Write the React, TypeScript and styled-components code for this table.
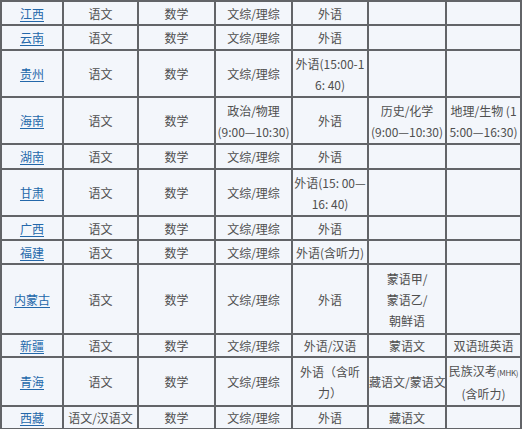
import React from 'react';
import styled, { createGlobalStyle } from 'styled-components';

const GlobalStyle = createGlobalStyle`
  html, body {
    margin: 0;
    padding: 0;
    background: #ffffff;
  }
  body {
    font-family: 'Noto Sans CJK SC', 'Noto Sans', sans-serif;
  }
`;

const COL_WIDTHS = [62, 75, 77, 77, 76, 78, 75];

const Small = styled.span`
  font-size: 8px;
  letter-spacing: -0.3px;
`;

type Row = {
  province: string;
  height: number;
  cells: React.ReactNode[][];
};

const ROWS: Row[] = [
  { province: '江西', height: 24, cells: [['语文'], ['数学'], ['文综/理综'], ['外语'], [], []] },
  { province: '云南', height: 25, cells: [['语文'], ['数学'], ['文综/理综'], ['外语'], [], []] },
  { province: '贵州', height: 47, cells: [['语文'], ['数学'], ['文综/理综'], ['外语(15:00-1', '6: 40)'], [], []] },
  {
    province: '海南',
    height: 47,
    cells: [
      ['语文'],
      ['数学'],
      ['政治/物理', '(9:00—10:30)'],
      ['外语'],
      ['历史/化学', '(9:00—10:30)'],
      ['地理/生物 (1', '5:00—16:30)'],
    ],
  },
  { province: '湖南', height: 25, cells: [['语文'], ['数学'], ['文综/理综'], ['外语'], [], []] },
  { province: '甘肃', height: 47, cells: [['语文'], ['数学'], ['文综/理综'], ['外语(15: 00—', '16: 40)'], [], []] },
  { province: '广西', height: 24, cells: [['语文'], ['数学'], ['文综/理综'], ['外语'], [], []] },
  { province: '福建', height: 24, cells: [['语文'], ['数学'], ['文综/理综'], ['外语(含听力)'], [], []] },
  {
    province: '内蒙古',
    height: 70,
    cells: [['语文'], ['数学'], ['文综/理综'], ['外语'], ['蒙语甲/', '蒙语乙/', '朝鲜语'], []],
  },
  { province: '新疆', height: 23, cells: [['语文'], ['数学'], ['文综/理综'], ['外语/汉语'], ['蒙语文'], ['双语班英语']] },
  {
    province: '青海',
    height: 49,
    cells: [
      ['语文'],
      ['数学'],
      ['文综/理综'],
      ['外语（含听', '力）'],
      ['藏语文/蒙语文'],
      [<>民族汉考<Small>(MHK)</Small></>, '(含听力)'],
    ],
  },
  { province: '西藏', height: 21, cells: [['语文/汉语文'], ['数学'], ['文综/理综'], ['外语'], ['藏语文'], []] },
];

const Table = styled.table`
  border-collapse: collapse;
  table-layout: fixed;
  width: 520px;
  background: #f3f6fb;
  border: 2px solid #626468;
`;

const TableRow = styled.tr<{ $h: number }>`
  height: ${(p) => p.$h}px;
`;

const Cell = styled.td`
  border: 2px solid #626468;
  padding: 0;
  text-align: center;
  vertical-align: middle;
  font-size: 12px;
  line-height: 21px;
  color: #4f4f4f;
  white-space: nowrap;
  overflow: hidden;
`;

const ProvinceLink = styled.a`
  color: #2468aa;
  text-decoration: underline;
  text-underline-offset: 2px;
  cursor: pointer;
`;

function CellText({ lines }: { lines: React.ReactNode[] }) {
  return (
    <>
      {lines.map((line, i) => (
        <React.Fragment key={i}>
          {i > 0 && <br />}
          {line}
        </React.Fragment>
      ))}
    </>
  );
}

export default function App() {
  return (
    <>
      <GlobalStyle />
      <Table>
        <colgroup>
          {COL_WIDTHS.map((w, i) => (
            <col key={i} style={{ width: w }} />
          ))}
        </colgroup>
        <tbody>
          {ROWS.map((row) => (
            <TableRow key={row.province} $h={row.height}>
              <Cell>
                <ProvinceLink>{row.province}</ProvinceLink>
              </Cell>
              {row.cells.map((lines, i) => (
                <Cell key={i}>
                  <CellText lines={lines} />
                </Cell>
              ))}
            </TableRow>
          ))}
        </tbody>
      </Table>
    </>
  );
}
